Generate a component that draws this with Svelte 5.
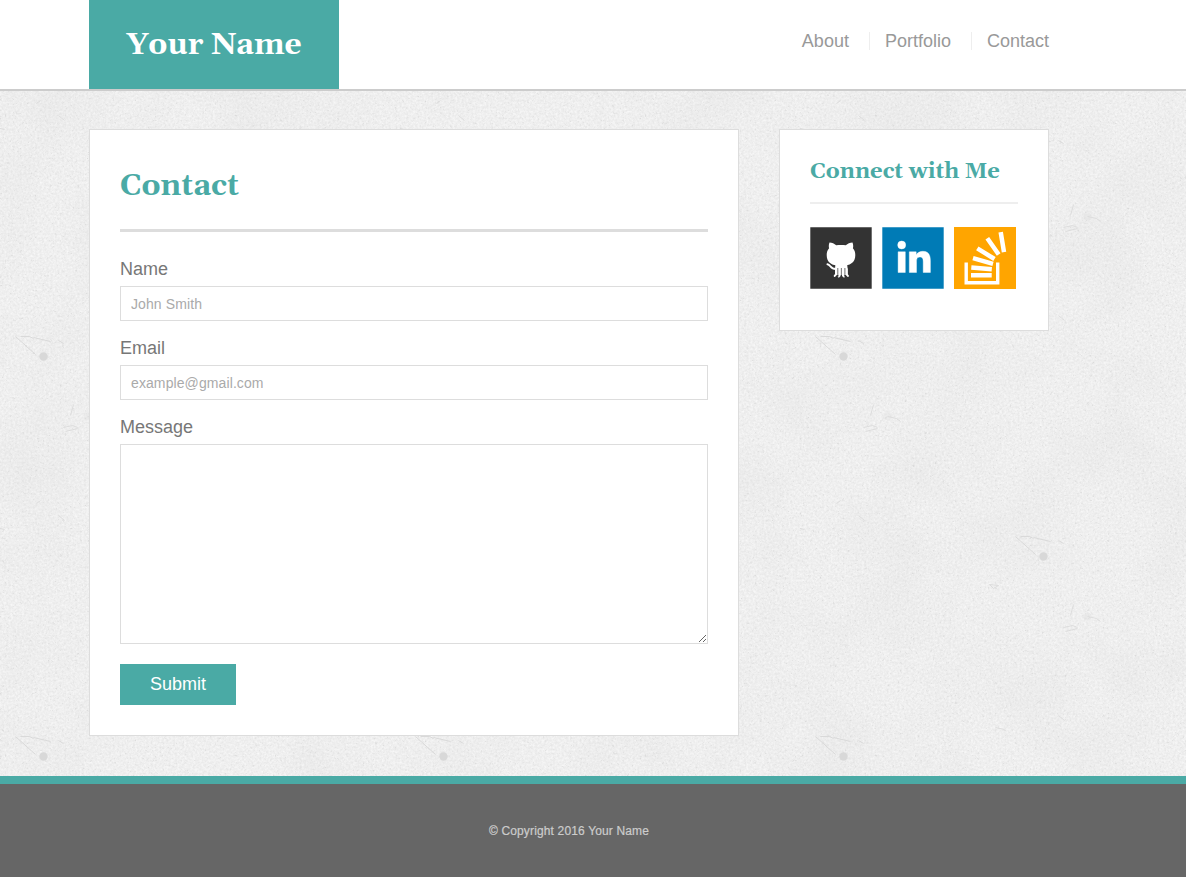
<script>
  const links = ['About', 'Portfolio', 'Contact'];
  const stains = [[43.5, 356.5], [243.5, 156.5], [43.5, -43.5], [243.5, 556.5]];
</script>

<svg class="texture" aria-hidden="true">
  <defs>
    <filter id="grain" x="0" y="0" width="100%" height="100%" color-interpolation-filters="sRGB">
      <feTurbulence type="fractalNoise" baseFrequency="0.45" numOctaves="4" seed="8" result="fine" />
      <feColorMatrix in="fine" type="matrix" values="0.09 0 0 0 0.893  0.09 0 0 0 0.893  0.09 0 0 0 0.893  0 0 0 0 1" result="base" />
      <feTurbulence type="fractalNoise" baseFrequency="0.014" numOctaves="5" seed="3" />
      <feColorMatrix type="matrix" values="0 0 0 0 0.8  0 0 0 0 0.8  0 0 0 0 0.8  0.25 0 0 0 -0.1" result="cloud" />
      <feTurbulence type="fractalNoise" baseFrequency="0.4" numOctaves="3" seed="21" />
      <feColorMatrix type="matrix" values="0 0 0 0 0.82  0 0 0 0 0.82  0 0 0 0 0.82  2.5 0 0 0 -1.6" result="specks" />
      <feMerge><feMergeNode in="base" /><feMergeNode in="cloud" /><feMergeNode in="specks" /></feMerge>
    </filter>
    <pattern id="marks" width="400" height="400" patternUnits="userSpaceOnUse">
      {#each stains as [x, y]}
        <g transform="translate({x} {y})">
          <circle r="4.200" fill="#d8d8d8" />
          <path d="M-28-20-8-2M-23-20h9l4 2M-10-19l17 4M15-16l5 3" fill="none" stroke="#d9d9d9" />
          <path d="M-54 28l9 1-5 3zM20 71l9-2 5 2M22 75l12-3M30 48l-3 11M-48 171l9 2M-7 147l4-3M15 159l6 5M44 60l9 2 4 3" fill="none" stroke="#dcdcdc" />
          <circle cx="44" cy="60" r="4" fill="#ddd" opacity=".3" />
        </g>
      {/each}
    </pattern>
  </defs>
  <rect width="100%" height="100%" filter="url(#grain)" />
  <rect width="100%" height="100%" fill="url(#marks)" />
</svg>

<header>
  <div class="container bar">
    <a class="logo" href="#top">Your Name</a>
    <nav>
      {#each links as link}<a href="#top">{link}</a>{/each}
    </nav>
  </div>
</header>

<main class="container">
  <section class="card">
    <h1>Contact</h1>
    <form>
      <label for="name">Name</label>
      <input id="name" type="text" placeholder="John Smith" />
      <label for="email">Email</label>
      <input id="email" type="email" placeholder="example@gmail.com" />
      <label for="message">Message</label>
      <textarea id="message"></textarea>
      <button type="button">Submit</button>
    </form>
  </section>

  <aside class="card">
    <h2>Connect with Me</h2>
    <div class="social">
      <svg viewBox="0 0 62 62">
        <path fill="#333" d="M.3.3h61.400v61.400H.3z" />
        <path fill="#fff" d="M19.500 15.500c2.500.1 4.900 1.300 6.700 2.700 3-.4 6.600-.4 9.600 0 1.800-1.400 4.200-2.600 6.700-2.700.8 1.900.9 3.900.4 5.700 1.700 1.900 2.400 4 2.400 6.900 0 7-4.300 9.700-9.300 10.200H26c-5-.5-9.300-3.200-9.300-10.200 0-2.900.7-5 2.400-6.900-.5-1.800-.4-3.800.4-5.700z" />
        <path fill="#fff" d="M25.500 36h11.500l.7 6v6H25v-6z" />
        <path fill="none" stroke="#fff" stroke-width="2" stroke-linecap="round" d="M17.500 37.300c3.200.2 2.700 5 8.500 4.800M26 42v5.300l-1.300 1.600M29.700 43v5.500l-1 1M33 43v5.500l1 1M36.600 42v5.300l1.300 1.600" />
        <path fill="none" stroke="#333" stroke-width=".7" d="M27.800 41v9M31.350 41v9M34.900 41v9" />
      </svg>
      <svg viewBox="0 0 62 62">
        <path fill="#007bb6" d="M.3.3h61.400v61.400H.3z" />
        <g fill="#fff" stroke="#fff" stroke-width=".4">
          <circle cx="19.700" cy="18" r="4" />
          <path d="M16.100 24.800h7.200v20.700h-7.200zM27.300 24.800h6.900v2.900c1.200-2 3.500-3.400 6.600-3.400 6 0 7.600 4 7.600 9.700v11.500h-7.200V35.100c0-2.600-.2-5-3.300-5s-3.400 2.300-3.400 4.900v10.500h-7.200z" />
        </g>
      </svg>
      <svg viewBox="0 0 62 62">
        <path fill="orange" d="M0 0h62v62H0z" />
        <g fill="none" stroke="#fff" stroke-width="4.500">
          <path stroke-width="3.400" d="M12.200 35.500v20.200h31.500V35.500" />
          <path d="M17 48.200h20.700M17.300 40.500l20.500 1.700M19 31.200l20 5.600M23.300 21.300l17.200 10.700M33.300 11.300l11.400 16.200M46.700 5.200l3.300 20" />
        </g>
      </svg>
    </div>
  </aside>
</main>

<footer><div class="container">© Copyright 2016 Your Name</div></footer>

<style>
  :global(body) { background: #eee; font-family: "Liberation Sans", Arial, sans-serif; font-size: 18px; color: #777; }
  :global(#app) { position: relative; height: 877px; display: flex; flex-direction: column; isolation: isolate; overflow: hidden; }
  .texture { position: absolute; inset: 0; width: 100%; height: 100%; z-index: -1; }
  .container { width: 960px; margin-left: 89px; box-sizing: border-box; }
  header { height: 89px; background: #fff; border-bottom: 2px solid #ccc; }
  .bar { display: flex; justify-content: space-between; }
  .logo, h1, h2 { font-family: Georgia, Gelasio, "DejaVu Serif", serif; font-weight: bold; }
  .logo { width: 250px; height: 89px; line-height: 90px; text-align: center; background: #4aaaa5; color: #fff; font-size: 30px; text-decoration: none; }
  nav { display: flex; padding-top: 32px; }
  nav a { color: #999; text-decoration: none; line-height: 18px; height: 18px; }
  nav a + a { border-left: 1px solid #eee; padding-left: 15px; margin-left: 20px; }
  main { display: flex; align-items: flex-start; justify-content: space-between; padding-top: 38px; height: 685px; box-sizing: border-box; }
  .card { box-sizing: border-box; background: #fff; border: 1px solid #ddd; padding: 30px; }
  section.card { width: 650px; height: 607px; }
  aside.card { width: 270px; height: 202px; }
  h1, h2 { margin: 0; color: #4aaaa5; white-space: nowrap; }
  h1 { height: 69px; line-height: 52px; font-size: 30px; border-bottom: 3px solid #ddd; margin-bottom: 27px; }
  h2 { height: 42px; line-height: 24px; font-size: 22px; border-bottom: 2px solid #eee; margin-bottom: 23px; }
  form { display: flex; flex-direction: column; }
  label { line-height: 21px; margin-bottom: 6px; }
  input, textarea { box-sizing: border-box; border: 1px solid #ddd; border-radius: 0; outline: 0; padding: 0 10px; font: 14px "Liberation Sans", Arial, sans-serif; background: #fff; }
  input { height: 35px; margin-bottom: 17px; }
  input::placeholder { color: #aaa; opacity: 1; letter-spacing: 0.1px; }
  textarea { height: 200px; margin-bottom: 20px; }
  button { align-self: flex-start; width: 116px; height: 41px; padding: 0; border: 0; background: #4aaaa5; color: #fff; font: 18px "Liberation Sans", Arial, sans-serif; }
  .social { display: flex; gap: 10px; }
  .social svg { width: 62px; height: 62px; flex: none; }
  footer { box-sizing: border-box; height: 101px; border-top: 8px solid #4aaaa5; background: #666; color: #ccc; font-size: 12px; line-height: 94px; text-align: center; letter-spacing: 0.15px; -webkit-text-stroke: 0.2px #ccc; }
</style>
